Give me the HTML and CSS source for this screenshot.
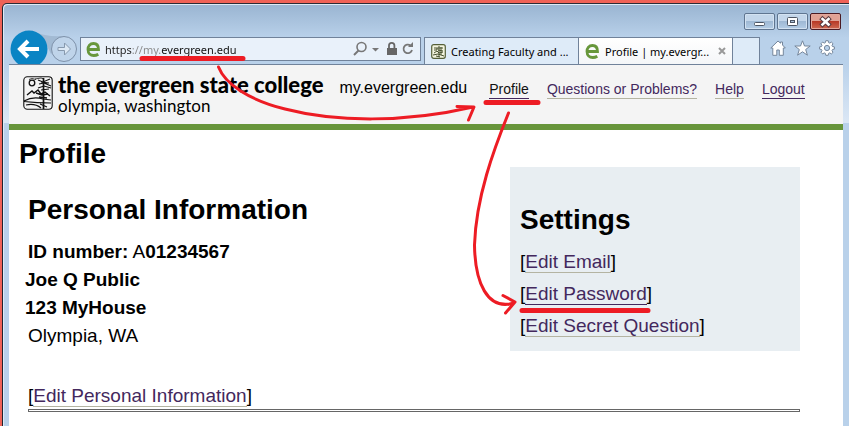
FILE: index.html
```
<!DOCTYPE html>
<html lang="en">
<head>
    <title>Profile | my.evergreen.edu</title>
    <meta charset="UTF-8">
    <meta name="viewport" content="width=device-width, initial-scale=1.0">
    <link rel="stylesheet" href="styles.css">
</head>
<body>
    <div class="window">
        <!-- Browser chrome -->
        <div class="title-bar">
            <button class="window-button" aria-label="Minimize">
                <svg width="29" height="15" viewBox="0 0 29 15"><rect x="9.5" y="8.5" width="10" height="3" rx="1" fill="#fff" stroke="#4c5563"/></svg>
            </button>
            <button class="window-button" aria-label="Maximize">
                <svg width="29" height="15" viewBox="0 0 29 15"><rect x="9.5" y="3.5" width="10" height="8" rx="1" fill="#fff" stroke="#4c5563"/><rect x="12.5" y="6.5" width="4" height="2" fill="#a9c0d8" stroke="#4c5563"/></svg>
            </button>
            <button class="window-button close-button" aria-label="Close">
                <svg width="29" height="15" viewBox="0 0 29 15"><path d="M11.500 5l6 5.500M17.500 5l-6 5.500" stroke="#5a3a40" stroke-width="4.600" stroke-linecap="square"/><path d="M11.500 5l6 5.500M17.500 5l-6 5.500" stroke="#fff" stroke-width="2.600" stroke-linecap="square"/></svg>
            </button>
        </div>

        <div class="toolbar">
            <div class="history">
                <svg width="71" height="34" viewBox="0 0 71 34" fill="none">
                    <path d="M24 2Q38 7 54 6L50 12L42 24L36 12z" fill="#a2bad3"/>
                    <circle cx="55" cy="19" r="12.5" fill="#bfd4ea" stroke="#7e91a9"/>
                    <path d="M49 17.500h6.500v-4.500l6 6l-6 6v-4.500h-6.500z" fill="#dce8f4" stroke="#8799ae"/>
                    <circle cx="20" cy="19" r="18.500" fill="#0a84c4"/>
                    <path d="M30 19H12M19 11l-8 8l8 8" stroke="#fff" stroke-width="4"/>
                </svg>
            </div>
            <div class="address-bar">
                <svg width="15" height="15" viewBox="0 0 15 15" fill="none"><path d="M2.500 7.500H12.500C12.500 3.500 10.500 1.500 7.500 1.500C4 1.500 2 4 2 7.500C2 11.500 4.500 13.500 7.700 13.500C9.500 13.500 11 13 12.300 12.200" stroke="#67973b" stroke-width="2.800"/></svg>
                <input class="address-input" type="text" aria-label="Address" value="https://my.evergreen.edu">
                <svg width="62" height="16" viewBox="0 0 62 16" fill="none">
                    <circle cx="8.500" cy="6" r="4.500" stroke="#777" stroke-width="1.600"/>
                    <path d="M5.500 9.500L1 14" stroke="#777" stroke-width="2"/>
                    <path d="M19 7h7l-3.500 3.500z" fill="#777"/>
                    <path d="M36 7V4.500a2.700 2.700 0 0 1 5.400 0V7" stroke="#666" stroke-width="1.800"/>
                    <rect x="34" y="7" width="10" height="7" fill="#666"/>
                    <path d="M57.500 4.500A4.300 4.300 0 1 0 59 9" stroke="#777" stroke-width="1.800"/>
                    <path d="M55 6h5V1z" fill="#777"/>
                </svg>
            </div>
            <div class="tab">
                <svg width="15" height="15" viewBox="0 0 15 15" fill="none"><rect x=".7" y=".7" width="13.600" height="13.600" rx="2" fill="#f3f4de" stroke="#555f38" stroke-width="1.200"/><path d="M3 4h3v2H3M8 2v11M6 4h6M7 6l5 1M3 9l3-2l2 2l4-1M2 11l5-1l6 2M5 12l4 1M10 3v8" stroke="#46502e"/></svg>
                <span>Creating Faculty and ...</span>
            </div>
            <div class="tab active-tab">
                <svg width="15" height="15" viewBox="0 0 15 15" fill="none"><path d="M2.500 7.500H12.500C12.500 3.500 10.500 1.500 7.500 1.500C4 1.500 2 4 2 7.500C2 11.500 4.500 13.500 7.700 13.500C9.500 13.500 11 13 12.300 12.200" stroke="#67973b" stroke-width="2.800"/></svg>
                <span>Profile | my.evergr...</span>
                <button class="tab-close" aria-label="Close tab">
                    <svg width="8" height="8" viewBox="0 0 8 8"><path d="M1 1l6 6M7 1l-6 6" stroke="#999" stroke-width="2"/></svg>
                </button>
            </div>
            <button class="new-tab" aria-label="New tab"></button>
            <div class="tools">
                <svg width="16" height="16" viewBox="0 0 16 16"><path d="M8 1L.8 8h2v7.300h4V10h2.500v5.300h4V8h2L12.500 5V2h-2v1.200z" fill="#fff" stroke="#75869b"/></svg>
                <svg width="17" height="16" viewBox="0 0 17 16"><path d="M8.500 .8l2 5.200h5.700l-4.500 3.500l1.700 5.700l-4.900-3.400l-4.900 3.400l1.700-5.700L.8 6h5.700z" fill="#fff" stroke="#75869b"/></svg>
                <svg width="16" height="16" viewBox="0 0 16 16"><path d="M6.800 .7h2.400l.4 1.900l1.100.5l1.700-1l1.600 1.600l-1 1.700l.5 1.100l1.900.4v2.200l-1.900.4l-.5 1.100l1 1.700l-1.600 1.600l-1.700-1l-1.100.5l-.4 1.900H6.800l-.4-1.900l-1.100-.5l-1.700 1L2 12.300l1-1.700l-.5-1.100L.6 9.100V6.900l1.900-.4L3 5.400l-1-1.700l1.600-1.600l1.700 1l1.100-.5z" fill="#fff" stroke="#75869b"/><circle cx="8" cy="8" r="2.600" fill="#b9d1ea" stroke="#75869b"/></svg>
            </div>
        </div>

        <!-- Page -->
        <div class="page">
            <header class="site-header">
                <svg width="30" height="34" viewBox="0 0 30 34" fill="none" stroke="#111">
                    <rect x=".8" y=".8" width="28.400" height="32.400" rx="3.500" stroke-width="1.100"/>
                    <circle cx="9" cy="7" r="2.800" stroke-width="1.300"/>
                    <path d="M6 3.500l3-1l4 1M12 3l6-1l3 1" stroke-width=".8"/>
                    <path d="M20.500 2V33" stroke-width="1.700"/>
                    <path d="M15 4l5 2l7-3M16 8l5-1l7 3M18 6l8 1M15 12l6-2l7 2M18 14l8-1" stroke-width="1.100"/>
                    <path d="M4 19l5-4l2 2l4-3l3 4l4-2l5 4M13 17l6 2l6-1M16 21l8 1" stroke-width="1.400"/>
                    <path d="M1 25Q10 20 20 23L28 24M1 25.500Q14 27 28 27M3 29q9-2 15 3M17 28l7 3" stroke-width="1.200"/>
                </svg>
                <div class="college">
                    <div class="college-name">the evergreen state college</div>
                    <div class="college-place">olympia, washington</div>
                </div>
                <div class="site-name">my.evergreen.edu</div>
                <nav class="site-nav">
                    <a class="current" href="#">Profile</a>
                    <a href="#">Questions or Problems?</a>
                    <a href="#">Help</a>
                    <a class="visited" href="#">Logout</a>
                </nav>
            </header>

            <main class="content">
                <h1>Profile</h1>
                <div class="columns">
                    <section class="personal">
                        <h2>Personal Information</h2>
                        <p><b>ID number:</b> A<b>01234567</b></p>
                        <div class="owner">
                            <p>Joe Q Public</p>
                            <p>123 MyHouse</p>
                        </div>
                        <p>Olympia, WA</p>
                    </section>
                    <section class="settings">
                        <h2>Settings</h2>
                        <p>[<a href="#">Edit Email</a>]</p>
                        <p>[<a class="current" href="#">Edit Password</a>]</p>
                        <p>[<a href="#">Edit Secret Question</a>]</p>
                    </section>
                </div>
                <p class="edit-personal">[<a href="#">Edit Personal Information</a>]</p>
                <hr class="divider">
            </main>
        </div>
    </div>

    <!-- Hand-drawn arrows over the page -->
    <svg class="annotations" width="849" height="426" viewBox="0 0 849 426">
        <path class="marker" d="M142 58.500H243M486 102.500H538M522 310.500H648"/>
        <path class="arrow" d="M218.500 67C225 84 249 100 285 109C335 122 405 123 473 107M457 106.500L474 107L468.500 120"/>
        <path class="arrow" d="M508.500 113C494 149 476 197 474.500 245C475 282 487 311 514 303M503 295.500L515 302L505.500 313"/>
    </svg>
</body>
</html>
```
FILE: styles.css
```
* {
    margin: 0;
    padding: 0;
    box-sizing: border-box;
}

body {
    min-height: 100vh;
    padding: 3px 0 0 2px;
    background: #ef6257;
    font-family: "Liberation Sans", Arial, sans-serif;
    font-size: 19px;
    color: #000;
    display: flex;
    flex-direction: column;
    overflow: hidden;
}

svg {
    display: block;
    flex: none;
}

button {
    border: none;
    background: none;
    cursor: pointer;
}

.window {
    flex: 1;
    display: flex;
    flex-direction: column;
    padding: 0 6px;
    border-top: 1px solid #2b2b35;
    border-left: 1px solid #1d2430;
    border-top-left-radius: 5px;
    background: linear-gradient(#99b4d1, #b9d1ea 34px, #b9d1ea 60px, #dbe7f5 119px, #b9d1ea 119px);
    box-shadow: inset 1px 1px 0 #dfeaf5;
}

/* Title bar */
.title-bar {
    height: 33px;
    padding: 9px 2px 0 0;
    display: flex;
    justify-content: flex-end;
    align-items: flex-start;
    gap: 2px;
}

.window-button {
    width: 31px;
    height: 17px;
    border: 1px solid #5f7590;
    border-radius: 2px;
    background: linear-gradient(#c3d6ea 50%, #9fb9d4 50%, #b4cde6);
    box-shadow: inset 0 0 0 1px #d3e2f1;
}

.close-button {
    border-color: #4a1a22;
    background: linear-gradient(#e0a295 50%, #b83a27 50%, #cf6a52);
    box-shadow: inset 0 0 0 1px #e3a79b;
}

/* Toolbar */
.toolbar {
    height: 28px;
    display: flex;
    align-items: stretch;
    border-bottom: 1px solid #70829a;
}

.history {
    display: flex;
    align-items: flex-end;
    height: 27px;
}

.address-bar {
    flex: 1;
    height: 24px;
    margin-right: 3px;
    padding: 0 5px;
    display: flex;
    align-items: center;
    border: 1px solid #70829a;
    background: #e9f1fa;
}

.address-input {
    flex: 1;
    min-width: 0;
    margin-left: 4px;
    border: none;
    outline: none;
    font-family: "Noto Sans", sans-serif;
    font-size: 11px;
    color: transparent;
    background: linear-gradient(90deg, #222 27px, #888 27px, #888 56px, #111 56px);
    -webkit-background-clip: text;
    background-clip: text;
}

.tab {
    width: 154px;
    padding: 0 6px;
    display: flex;
    align-items: center;
    gap: 5px;
    border-top: 1px solid #70829a;
    border-left: 1px solid #70829a;
    background: #deebf8;
    font-family: "Noto Sans", sans-serif;
    font-size: 11px;
    white-space: nowrap;
}

.active-tab {
    background: linear-gradient(#fff, #f4f6f8);
}

.tab-close {
    margin-left: auto;
}

.new-tab {
    width: 28px;
    border: 1px solid #70829a;
    border-bottom: none;
    background: #deebf8;
}

.tools {
    width: 83px;
    padding: 0 8px 6px 10px;
    display: flex;
    align-items: center;
    justify-content: space-between;
}

/* Page */
.page {
    flex: 1;
    background: #fff;
}

.site-header {
    height: 65px;
    padding: 11px 14px 0;
    display: flex;
    align-items: flex-start;
    background: #f4f4f4;
    border-bottom: 6px solid #67953b;
}

.college {
    margin-left: 5px;
    font-family: Lato, sans-serif;
    white-space: nowrap;
}

.college-name {
    font-size: 22px;
    line-height: 18px;
    font-weight: 900;
}

.college-place {
    font-size: 17px;
    line-height: 24px;
}

.site-name {
    margin-left: 16px;
    font-size: 16px;
    line-height: 24px;
}

.site-nav {
    margin: 4px 0 0 22px;
    display: flex;
    gap: 18px;
    font-size: 14px;
    line-height: 18px;
    white-space: nowrap;
}

a {
    color: #43285d;
    text-decoration: none;
    border-bottom: 1px solid #b4b4a2;
}

a.current,
a.visited {
    border-bottom-color: #43285d;
}

.site-nav .current {
    color: #111;
}

.content {
    padding: 8px 43px 13px 19px;
}

h1 {
    margin-left: -9px;
    font-size: 28px;
    line-height: 32px;
}

h2 {
    font-size: 28px;
    line-height: 32px;
}

.columns {
    margin-top: -3px;
    display: flex;
    justify-content: space-between;
    align-items: flex-start;
}

.personal {
    padding-top: 27px;
}

.personal h2 {
    margin-bottom: 12px;
}

.personal p {
    line-height: 28px;
}

.owner {
    margin-left: -3px;
    font-weight: bold;
}

.settings {
    width: 290px;
    padding: 37px 10px 9px;
    background: #e8eef2;
}

.settings h2 {
    margin-bottom: 10px;
}

.settings p {
    line-height: 32px;
}

.edit-personal {
    margin-top: 32px;
    line-height: 26px;
}

.divider {
    height: 3px;
    border: 1px solid #666;
}

/* Red marker strokes */
.annotations {
    position: absolute;
    top: 0;
    left: 0;
    pointer-events: none;
}

.marker,
.arrow {
    fill: none;
    stroke: #ed1c24;
    stroke-width: 5px;
    stroke-linecap: round;
    stroke-linejoin: round;
}

.arrow {
    stroke-width: 3px;
}
```
